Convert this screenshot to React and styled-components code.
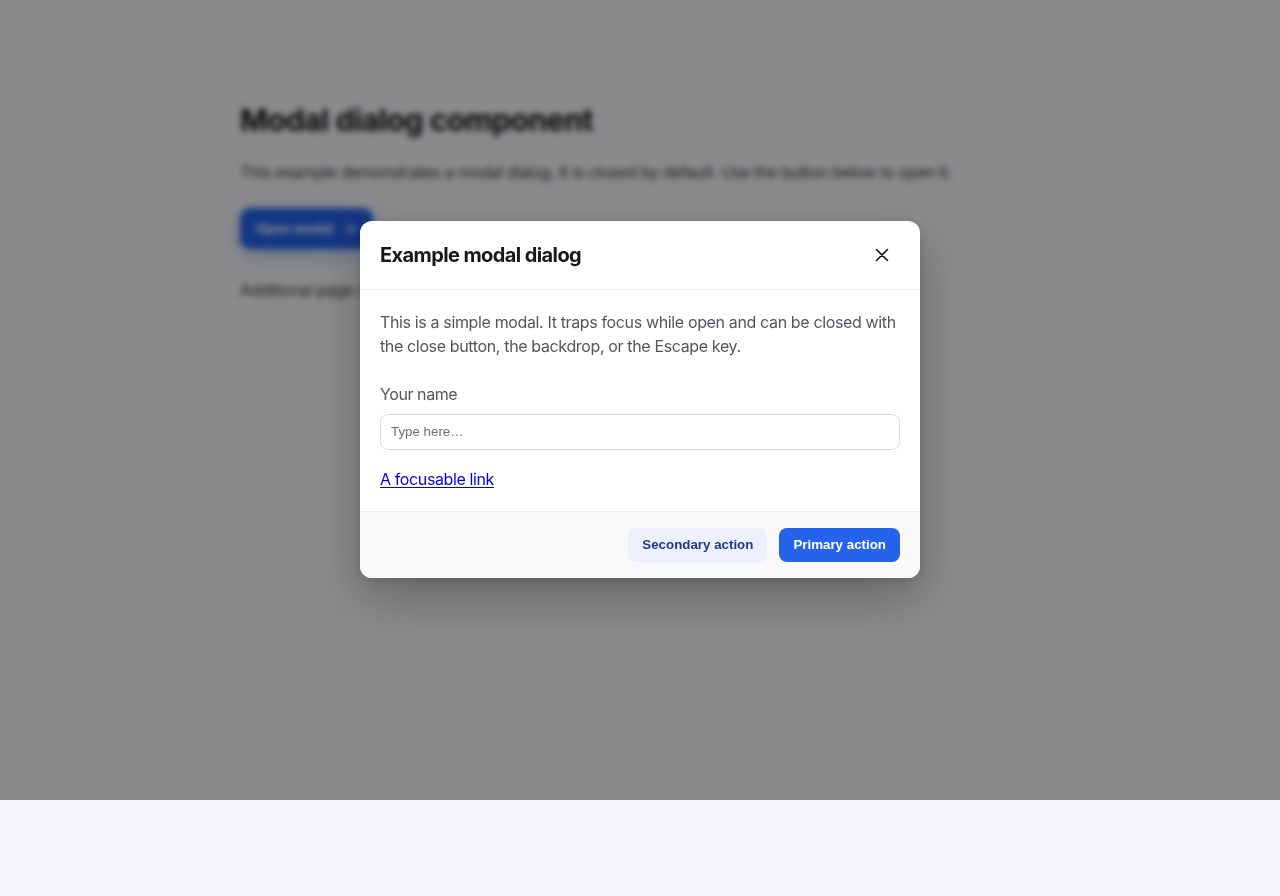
import React from "react";
import styled, { createGlobalStyle } from "styled-components";

const Global = createGlobalStyle`
  * { box-sizing: border-box; }
  html, body { margin: 0; padding: 0; background: #f6f6fa; }
  body { font-family: Inter, "Noto Sans", sans-serif; color: #1f1f23; }
`;

const Stage = styled.div`
  position: relative;
  height: 800px;
  background: #f6f6fa;
`;

const Main = styled.main`
  max-width: 800px;
  margin: 0 auto;
  padding-top: 101px;
`;

const Heading = styled.h1`
  margin: 0;
  font-size: 30px;
  line-height: 38px;
  font-weight: 700;
  color: #111114;
  letter-spacing: -0.4px;
`;

const Lead = styled.p`
  margin: 21px 0 0;
  font-size: 16px;
  line-height: 24px;
  color: #3a3a40;
  letter-spacing: -0.32px;
`;

const OpenButton = styled.button`
  margin-top: 24px;
  height: 41px;
  padding: 0 16px;
  display: inline-flex;
  align-items: center;
  gap: 10px;
  border: 0;
  border-radius: 10px;
  background: #2563eb;
  color: #fff;
  font-family: "Liberation Sans", Arial, sans-serif;
  font-weight: 700;
  font-size: 13.333px;
  box-shadow: 0 6px 16px rgba(37, 99, 235, 0.35);
`;

const Note = styled.p`
  margin: 29px 0 0;
  font-size: 16px;
  line-height: 24px;
  color: #3a3a40;
  letter-spacing: -0.32px;
`;

const Backdrop = styled.div`
  position: absolute;
  inset: 0;
  padding-bottom: 2px;
  background: rgba(0, 0, 0, 0.44);
  backdrop-filter: blur(3px);
  -webkit-backdrop-filter: blur(3px);
  display: flex;
  align-items: center;
  justify-content: center;
`;

const Dialog = styled.div`
  width: 560px;
  background: #fff;
  border-radius: 12px;
  overflow: hidden;
  box-shadow: 0 20px 50px rgba(0, 0, 0, 0.25), 0 4px 12px rgba(0, 0, 0, 0.12);
`;

const Header = styled.div`
  display: flex;
  align-items: center;
  justify-content: space-between;
  padding: 16px 20px;
  border-bottom: 1px solid #ececef;
`;

const Title = styled.h2`
  margin: 0;
  font-size: 20px;
  line-height: 28px;
  font-weight: 700;
  color: #18181b;
  letter-spacing: -0.6px;
`;

const CloseButton = styled.button`
  width: 36px;
  height: 36px;
  border: 0;
  background: transparent;
  border-radius: 8px;
  display: flex;
  align-items: center;
  justify-content: center;
  padding: 0;
  color: #111;
`;

const Body = styled.div`
  padding: 20px;
`;

const Text = styled.p`
  margin: 0;
  font-size: 16px;
  line-height: 24px;
  color: #55555e;
  letter-spacing: -0.36px;
`;

const Label = styled.label`
  display: block;
  margin-top: 24px;
  font-size: 16px;
  line-height: 24px;
  color: #55555e;
  letter-spacing: -0.42px;
`;

const Input = styled.input`
  display: block;
  width: 100%;
  height: 36px;
  margin-top: 8px;
  padding: 0 10px;
  border: 1px solid #d9d9de;
  border-radius: 8px;
  font-family: "Liberation Sans", Arial, sans-serif;
  font-size: 13.333px;
  color: #222;
  outline: none;
  &::placeholder { color: #6f6f75; }
`;

const LinkRow = styled.div`
  margin-top: 17px;
  font-size: 16px;
  line-height: 24px;
  letter-spacing: -0.38px;
`;

const Link = styled.a`
  color: #0000ee;
  text-decoration: underline;
  text-underline-offset: 2px;
`;

const Footer = styled.div`
  display: flex;
  justify-content: flex-end;
  gap: 12px;
  padding: 16px 20px;
  background: #f9f9fa;
  border-top: 1px solid #ececef;
`;

const ActionButton = styled.button`
  height: 34px;
  padding: 0 14px;
  border: 0;
  border-radius: 8px;
  font-family: "Liberation Sans", Arial, sans-serif;
  font-weight: 700;
  font-size: 13.333px;
  background: ${(p) => (p.$primary ? "#2563eb" : "#edf1fd")};
  color: ${(p) => (p.$primary ? "#ffffff" : "#1e3a8a")};
`;

const XIcon = () => (
  <svg width="20" height="20" viewBox="0 0 20 20" fill="none" stroke="currentColor" strokeWidth="1.6" strokeLinecap="round">
    <path d="M4.5 4.5l11 11M15.5 4.5l-11 11" />
  </svg>
);

const ArrowIcon = () => (
  <svg width="14" height="14" viewBox="0 0 24 24" fill="none" stroke="currentColor" strokeWidth="2.2" strokeLinecap="round" strokeLinejoin="round">
    <path d="M5 12h14M13 6l6 6-6 6" />
  </svg>
);

export default function App() {
  return (
    <>
      <Global />
      <Stage>
        <Main>
          <Heading>Modal dialog component</Heading>
          <Lead>This example demonstrates a modal dialog. It is closed by default. Use the button below to open it.</Lead>
          <OpenButton>
            Open modal <ArrowIcon />
          </OpenButton>
          <Note>Additional page content goes here.</Note>
        </Main>
        <Backdrop>
          <Dialog role="dialog" aria-modal="true">
            <Header>
              <Title>Example modal dialog</Title>
              <CloseButton aria-label="Close">
                <XIcon />
              </CloseButton>
            </Header>
            <Body>
              <Text>
                This is a simple modal. It traps focus while open and can be closed with the close button, the backdrop, or the Escape key.
              </Text>
              <Label htmlFor="name">Your name</Label>
              <Input id="name" placeholder="Type here…" />
              <LinkRow>
                <Link href="#">A focusable link</Link>
              </LinkRow>
            </Body>
            <Footer>
              <ActionButton>Secondary action</ActionButton>
              <ActionButton $primary>Primary action</ActionButton>
            </Footer>
          </Dialog>
        </Backdrop>
      </Stage>
    </>
  );
}
